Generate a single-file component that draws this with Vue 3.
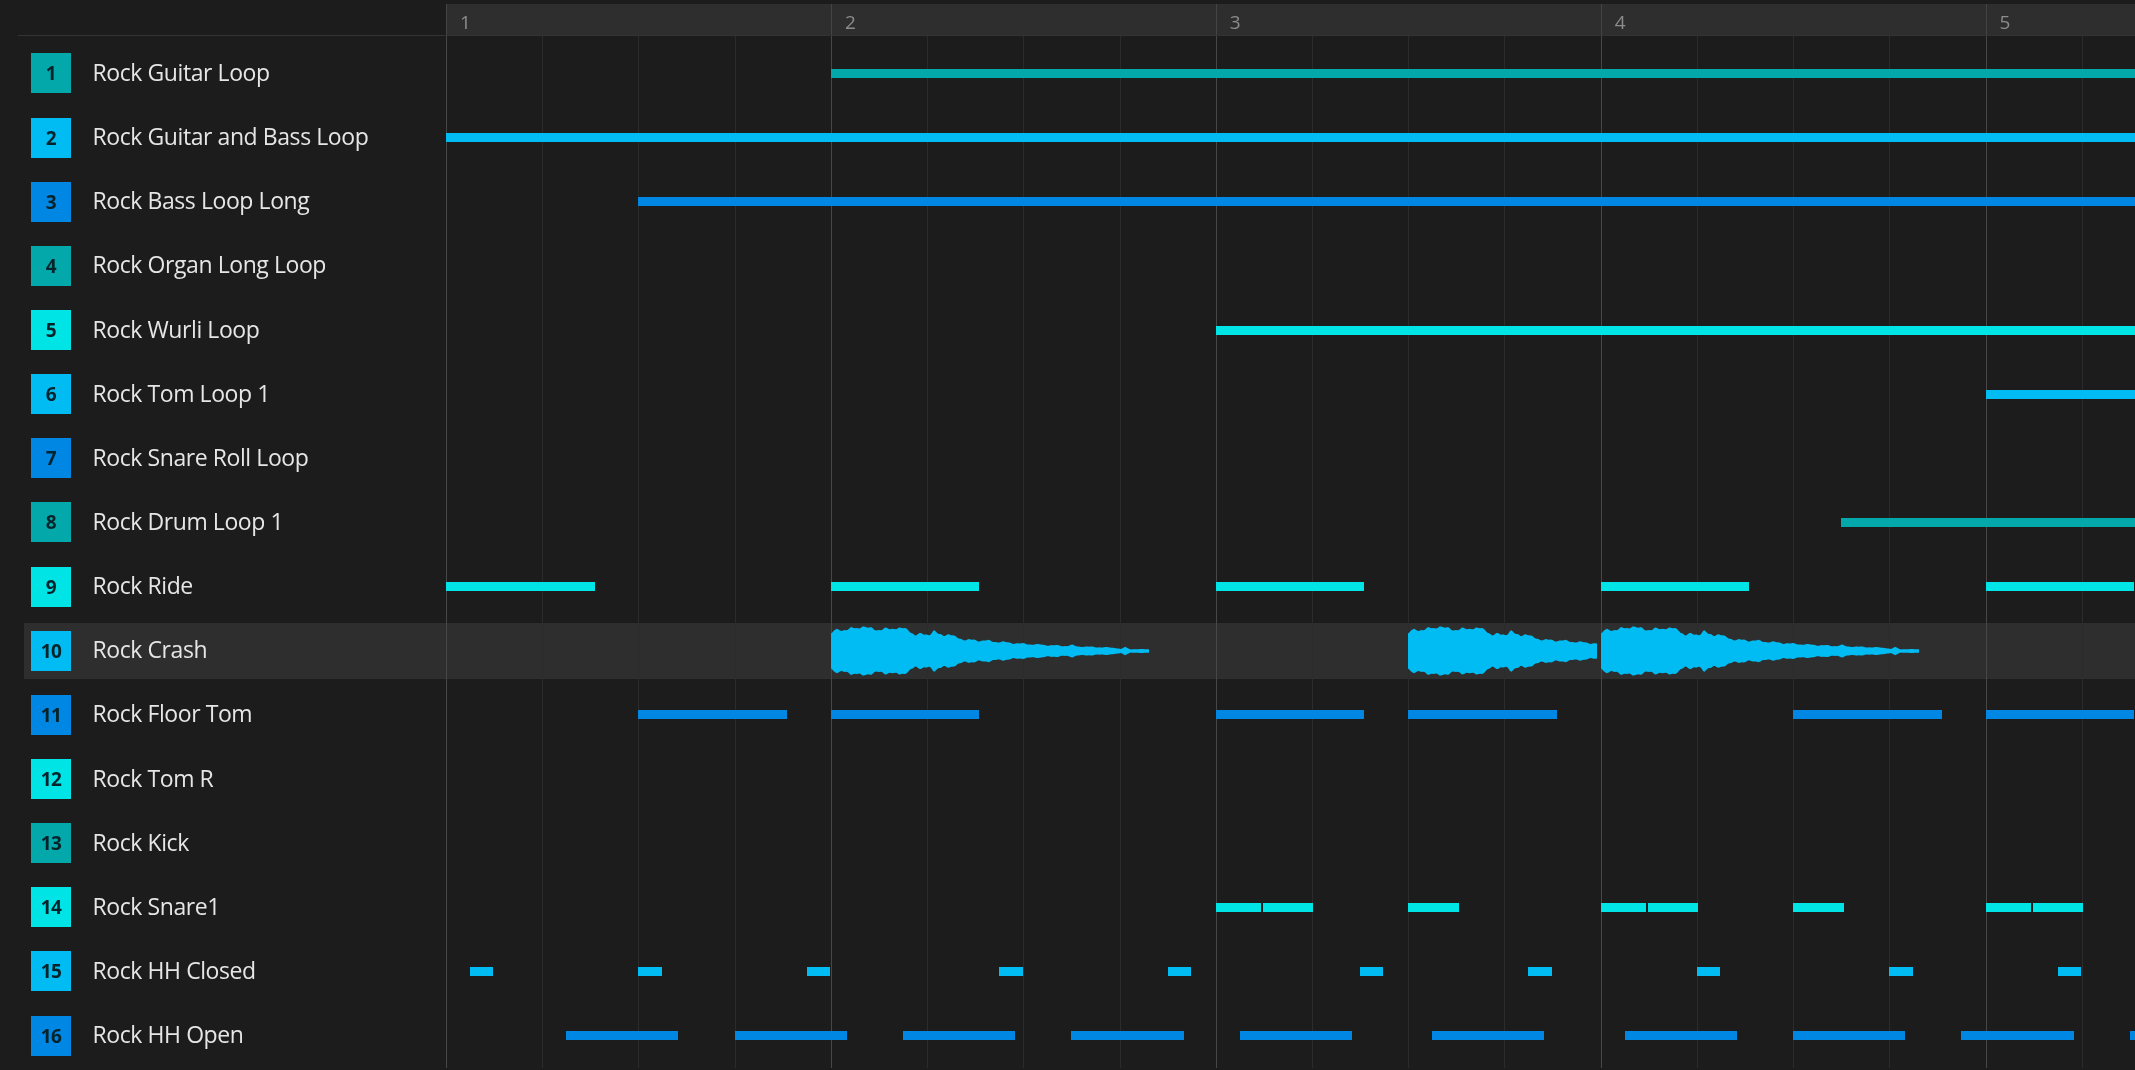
<script setup>
const BEAT = 96.22

const colors = {
  teal: '#03a8ab',
  sky: '#00bcf2',
  blue: '#0086e3',
  cyan: '#00e4e6'
}

const ride = [0, 4, 8, 12, 16].map((b) => [b, 148.5])
const floorTom = [2, 4, 8, 10, 14, 16].map((b) => [b, 148.5])
const snare = [
  [8, 45], [8.49, 50.5], [10, 50.5], [12, 45], [12.49, 50.5], [14, 50.5], [16, 45], [16.49, 50.5]
]
const hhClosed = [0.25, 2, 3.75, 5.75, 7.5, 9.5, 11.25, 13, 15, 16.75].map((b) => [b, 23.3])
const hhOpen = [1.25, 3, 4.75, 6.5, 8.25, 10.25, 12.25, 14, 15.75, 17.5].map((b) => [b, 112.2])

const tracks = [
  { name: 'Rock Guitar Loop', color: 'teal', clips: [[4, 1400]] },
  { name: 'Rock Guitar and Bass Loop', color: 'sky', clips: [[0, 1800]] },
  { name: 'Rock Bass Loop Long', color: 'blue', clips: [[2, 1600]] },
  { name: 'Rock Organ Long Loop', color: 'teal', clips: [] },
  { name: 'Rock Wurli Loop', color: 'cyan', clips: [[8, 1000]] },
  { name: 'Rock Tom Loop 1', color: 'sky', clips: [[16, 300]] },
  { name: 'Rock Snare Roll Loop', color: 'blue', clips: [] },
  { name: 'Rock Drum Loop 1', color: 'teal', clips: [[14.5, 500]] },
  { name: 'Rock Ride', color: 'cyan', clips: ride },
  { name: 'Rock Crash', color: 'sky', clips: [], selected: true },
  { name: 'Rock Floor Tom', color: 'blue', clips: floorTom },
  { name: 'Rock Tom R', color: 'cyan', clips: [] },
  { name: 'Rock Kick', color: 'teal', clips: [] },
  { name: 'Rock Snare1', color: 'cyan', clips: snare },
  { name: 'Rock HH Closed', color: 'sky', clips: hhClosed },
  { name: 'Rock HH Open', color: 'blue', clips: hhOpen }
]

const bars = [1, 2, 3, 4, 5]
const gridLines = Array.from({ length: 18 }, (_, i) => ({ left: i * BEAT, major: i % 4 === 0 }))

// rough outline of the crash sample, half height against px from clip start
const envelope = [
  [0, 17], [3, 20], [8, 21], [18, 22], [28, 23], [31, 26], [35, 23], [48, 21.5], [60, 22], [64, 23.5],
  [78, 21], [84, 16], [98, 17], [103, 20], [108, 16], [118, 17], [123, 14], [136, 11], [152, 10.5],
  [170, 9], [188, 7.5], [205, 6.5], [235, 5], [241, 6], [246, 4.6], [285, 3.2], [290, 1.8], [294, 4],
  [299, 1.8], [318, 1.8]
]

function envAt(x) {
  for (let i = 1; i < envelope.length; i++) {
    const [x0, y0] = envelope[i - 1]
    const [x1, y1] = envelope[i]
    if (x <= x1) return y0 + ((y1 - y0) * (x - x0)) / (x1 - x0)
  }
  return 1.8
}

function wobble(x) {
  const amp = Math.min(1.2, envAt(x) * 0.08)
  return amp * (Math.sin(x * 0.37) + Math.sin(x * 0.91 + 2.3) * 0.5)
}

function wavePath(width) {
  const top = []
  const bottom = []
  for (let x = 0; x <= width; x += 1.5) {
    // top and bottom move together so the shape stays centred on the lane
    const h = envAt(x) + wobble(x)
    top.push(`${x} ${(-h).toFixed(1)}`)
    bottom.unshift(`${x} ${h.toFixed(1)}`)
  }
  return `M${top.join('L')}L${bottom.join('L')}Z`
}

const waves = [
  { left: 384.9, width: 318 },
  { left: 962.2, width: 189 },
  { left: 1154.6, width: 318 }
].map((w) => ({ ...w, d: wavePath(w.width) }))
</script>

<template>
  <div class="page">
    <div class="header">
      <div class="header-left"></div>
      <div class="ruler">
        <span v-for="b in bars" :key="b" class="bar-label">{{ b }}</span>
      </div>
    </div>

    <div class="body">
      <div class="grid-lines">
        <i
          v-for="g in gridLines"
          :key="g.left"
          class="grid-line"
          :class="{ major: g.major }"
          :style="{ left: g.left + 'px' }"
        ></i>
      </div>

      <div v-for="(t, i) in tracks" :key="t.name" class="row" :class="{ selected: t.selected }">
        <div class="track">
          <div class="num" :style="{ background: colors[t.color] }">{{ i + 1 }}</div>
          <div class="name">{{ t.name }}</div>
        </div>
        <div class="lane">
          <i
            v-for="c in t.clips"
            :key="c[0]"
            class="clip"
            :style="{ left: c[0] * BEAT + 'px', width: c[1] + 'px', background: colors[t.color] }"
          ></i>
          <template v-if="t.selected">
            <svg
              v-for="w in waves"
              :key="w.left"
              class="wave"
              :style="{ left: w.left + 'px', width: w.width + 'px' }"
              :viewBox="`0 -30 ${w.width} 60`"
            >
              <path :d="w.d" fill="#00bcf2" />
            </svg>
          </template>
        </div>
      </div>
    </div>
  </div>
</template>

<style>
html,
body {
  background: #1c1c1c;
  overflow: hidden;
}
</style>

<style scoped>
.page {
  width: 2135px;
  height: 1070px;
  overflow: hidden;
  background: #1c1c1c;
  font-family: "Open Sans", "Liberation Sans", sans-serif;
  filter: blur(0.4px);
}

.header {
  display: flex;
  height: 31px;
  margin-top: 4px;
  margin-left: 18px;
  border-bottom: 1px solid #333;
}

.header-left {
  width: 428px;
  flex: none;
}

.ruler {
  flex: 1;
  display: flex;
  background: #2e2e2e;
}

.bar-label {
  width: 384.88px;
  flex: none;
  padding-left: 13px;
  border-left: 1px solid #444;
  box-sizing: border-box;
  color: #8c8c8c;
  font-size: 19px;
  line-height: 36px;
}

.body {
  position: relative;
  padding-top: 5.4px;
}

.grid-lines {
  position: absolute;
  top: 0;
  bottom: 0;
  left: 446px;
  right: 0;
  z-index: 1;
  pointer-events: none;
}

.grid-line {
  position: absolute;
  top: 0;
  bottom: 0;
  width: 1px;
  background: #2b2b2b;
}

.grid-line.major {
  background: #474747;
}

.row {
  position: relative;
  display: flex;
  height: 64.15px;
}

.row.selected::before {
  content: "";
  position: absolute;
  left: 24px;
  right: 0;
  top: 4px;
  bottom: 4px;
  background: #2e2e2e;
}

.track {
  position: relative;
  z-index: 2;
  width: 446px;
  flex: none;
  display: flex;
  align-items: center;
  padding-left: 31px;
  box-sizing: border-box;
}

.num {
  width: 40px;
  height: 40px;
  flex: none;
  display: flex;
  align-items: center;
  justify-content: center;
  color: #04232b;
  font-size: 19px;
  font-weight: 700;
  letter-spacing: -0.5px;
}

.name {
  margin: 0 0 3px 21.5px;
  color: #e6e6e6;
  font-size: 23px;
  letter-spacing: -0.42px;
  white-space: nowrap;
}

.lane {
  position: relative;
  z-index: 2;
  flex: 1;
}

.clip {
  position: absolute;
  top: 50%;
  height: 9px;
  margin-top: -4.5px;
}

.wave {
  position: absolute;
  top: 50%;
  height: 60px;
  margin-top: -30px;
}
</style>
